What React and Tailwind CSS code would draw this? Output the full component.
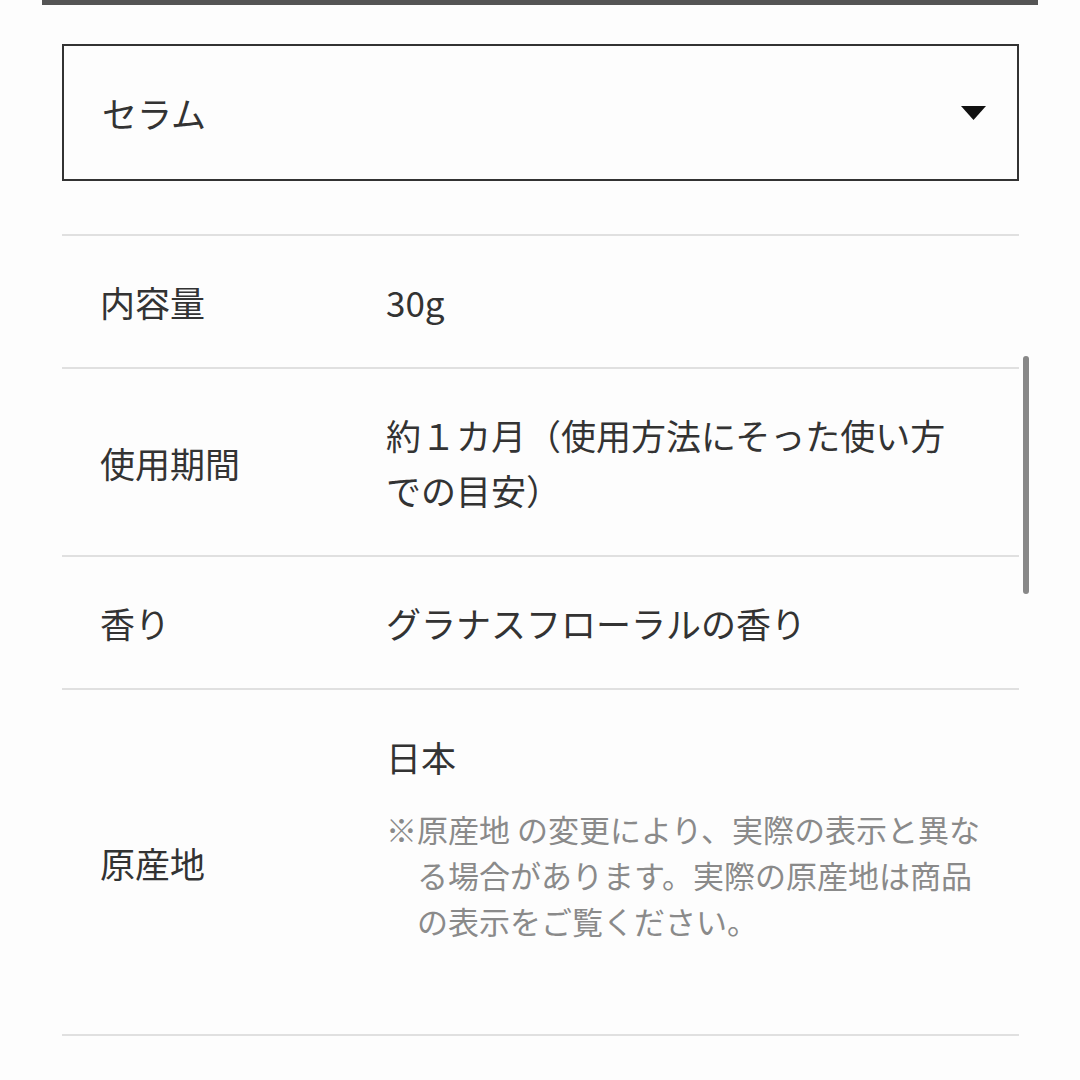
import React from 'react';

const rows = [
    { label: '内容量', value: '30g' },
    { label: '使用期間', value: '約１カ月（使用方法にそった使い方での目安）' },
    { label: '香り', value: 'グラナスフローラルの香り' },
];

const SpecRow = ({ label, children, className = '' }) => (
    <div className={`flex items-center border-t-2 border-[#e0e0e0] pl-[38px] ${className}`}>
        <div className="w-[286px] shrink-0">{label}</div>
        <div className="w-[578px]">{children}</div>
    </div>
);

export default function App() {
    return (
        <div
            className="relative min-h-[1080px] overflow-hidden bg-[#fdfdfd] text-[#333] text-[35px] leading-[55px]"
            style={{ fontFamily: '"Noto Sans CJK JP", "Noto Sans", sans-serif' }}
        >
            {/* top edge of previous block */}
            <div className="mx-[42px] h-[5px] bg-[#555]" />

            <div className="px-[62px] pr-[61px] pt-[39px]">
                {/* select */}
                <div className="flex h-[137px] items-center justify-between border-2 border-[#333] pl-[38px] pr-[31px]">
                    <span>セラム</span>
                    <svg width="25" height="16" viewBox="0 0 25 16">
                        <polygon points="0,1 25,1 12.5,15" fill="#111" />
                    </svg>
                </div>

                <div className="mt-[53px]">
                    {rows.map((r) => (
                        <SpecRow key={r.label} label={r.label} className="py-[38px]">
                            {r.value}
                        </SpecRow>
                    ))}

                    <SpecRow label="原産地" className="h-[346px]">
                        <div className="pb-[52px]">
                            <div>日本</div>
                            <p className="mt-[22px] w-[600px] pl-[31px] -indent-[31px] text-[31px] leading-[46px] text-[#8a8a8a]">
                                ※原産地 の変更により、実際の表示と異なる場合があります。実際の原産地は商品の表示をご覧ください。
                            </p>
                        </div>
                    </SpecRow>
                    <div className="border-t-2 border-[#e0e0e0]" />
                </div>
            </div>

            {/* scrollbar */}
            <div className="absolute left-[1023px] top-[356px] h-[238px] w-[6px] rounded-full bg-[#888]" />
        </div>
    );
}
